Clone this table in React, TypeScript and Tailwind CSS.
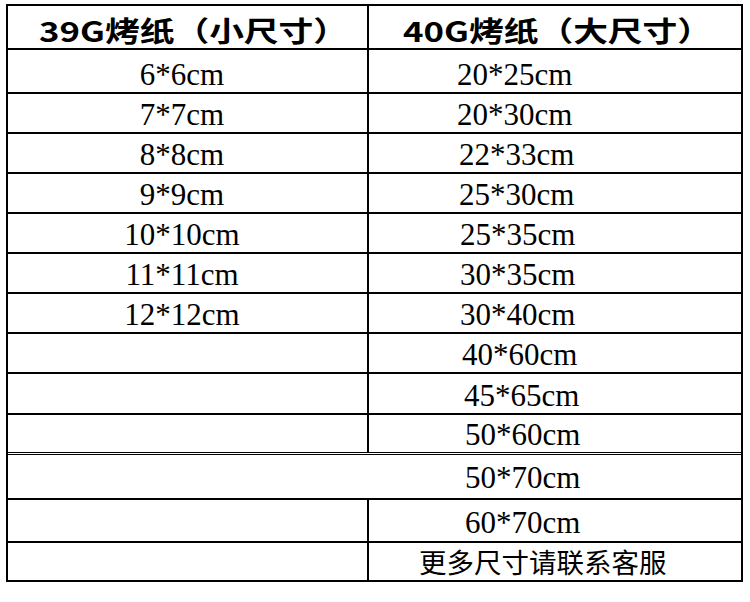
type SizeRow = {
  left: string;
  right: string;
  h: string;
  pl: string;
  border: string;
};

const rows: SizeRow[] = [
  { left: "6*6cm", right: "20*25cm", h: "h-[44px]", pl: "pl-[88px]", border: "border-b-2" },
  { left: "7*7cm", right: "20*30cm", h: "h-[40px]", pl: "pl-[88px]", border: "border-b-2" },
  { left: "8*8cm", right: "22*33cm", h: "h-[40px]", pl: "pl-[90px]", border: "border-b-2" },
  { left: "9*9cm", right: "25*30cm", h: "h-[40px]", pl: "pl-[90px]", border: "border-b-2" },
  { left: "10*10cm", right: "25*35cm", h: "h-[40px]", pl: "pl-[91px]", border: "border-b-2" },
  { left: "11*11cm", right: "30*35cm", h: "h-[40px]", pl: "pl-[91px]", border: "border-b-2" },
  { left: "12*12cm", right: "30*40cm", h: "h-[40px]", pl: "pl-[91px]", border: "border-b-2" },
  { left: "", right: "40*60cm", h: "h-[40px]", pl: "pl-[93px]", border: "border-b-2" },
  { left: "", right: "45*65cm", h: "h-[41px]", pl: "pl-[95px]", border: "border-b-2" },
  { left: "", right: "50*60cm", h: "h-[40px]", pl: "pl-[96px]", border: "border-b-[3px] border-double" },
];

const serif = "font-['Liberation_Serif',serif] text-[31px] leading-none text-black";
const cjk = "font-['Noto_Sans_CJK_SC','Noto_Sans',sans-serif] text-black";

export default function App() {
  return (
    <div className="h-[602px] w-[750px] bg-white pl-[6px] pt-[4px]">
      <div className="w-[737px] border-2 border-black">
        {/* header */}
        <div className="flex h-[44px] border-b-2 border-black">
          <div className="flex w-[361px] items-center justify-center border-r-2 border-black pl-[13px] pt-[6px]">
            <span className={`inline-block scale-x-[1.24] text-[28px] leading-none font-bold ${cjk}`}>
              39G烤纸（小尺寸）
            </span>
          </div>
          <div className="flex flex-1 items-center justify-center pl-[6px] pt-[6px]">
            <span className={`inline-block scale-x-[1.24] text-[28px] leading-none font-bold ${cjk}`}>
              40G烤纸（大尺寸）
            </span>
          </div>
        </div>

        {rows.map((row) => (
          <div key={row.right} className={`flex border-black ${row.h} ${row.border}`}>
            <div className="flex w-[361px] items-end justify-center border-r-2 border-black pr-[11px] pb-[2px]">
              <span className={serif}>{row.left}</span>
            </div>
            <div className={`flex flex-1 items-end pb-[2px] ${row.pl}`}>
              <span className={serif}>{row.right}</span>
            </div>
          </div>
        ))}

        {/* merged row, no divider */}
        <div className="flex h-[45px] items-end border-b-2 border-black pb-[5px] pl-[457px]">
          <span className={serif}>50*70cm</span>
        </div>

        <div className="flex h-[43px] border-b-2 border-black">
          <div className="w-[361px] border-r-2 border-black" />
          <div className="flex flex-1 items-end pb-[3px] pl-[96px]">
            <span className={serif}>60*70cm</span>
          </div>
        </div>

        <div className="flex h-[37px]">
          <div className="w-[361px] border-r-2 border-black" />
          <div className="flex flex-1 items-center pl-[50px]">
            <span className={`text-[27.5px] leading-none ${cjk}`}>更多尺寸请联系客服</span>
          </div>
        </div>
      </div>
    </div>
  );
}
